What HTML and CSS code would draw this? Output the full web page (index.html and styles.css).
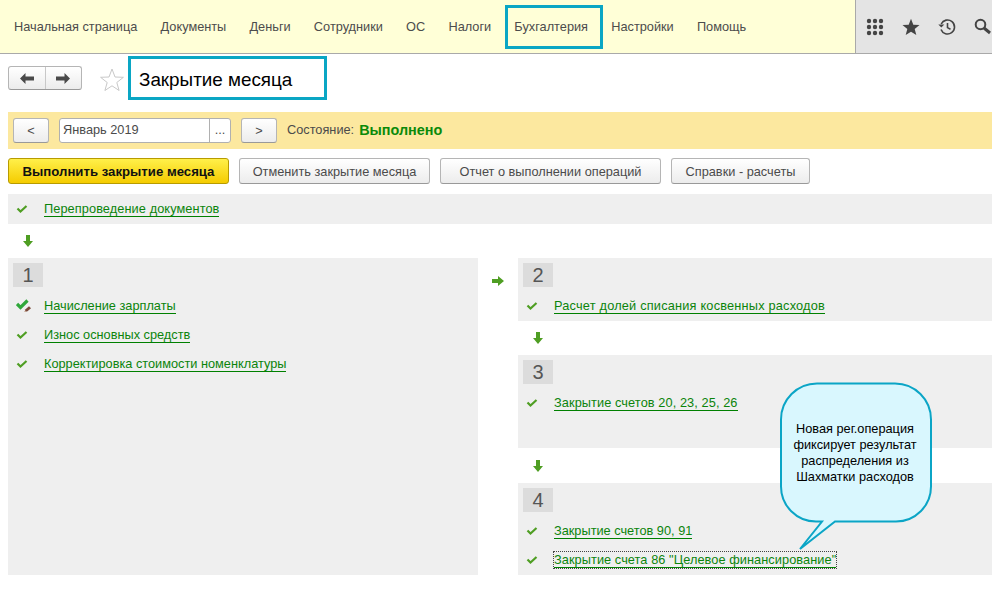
FILE: index.html
```html
<!DOCTYPE html>
<html lang="ru">
<head>
<meta charset="utf-8">
<title>Закрытие месяца</title>
<link rel="stylesheet" href="styles.css">
</head>
<body>
<header class="topbar">
  <nav class="menu">
    <a class="menu-item">Начальная страница</a>
    <a class="menu-item">Документы</a>
    <a class="menu-item">Деньги</a>
    <a class="menu-item">Сотрудники</a>
    <a class="menu-item">ОС</a>
    <a class="menu-item">Налоги</a>
    <a class="menu-item menu-item-marked">Бухгалтерия</a>
    <a class="menu-item">Настройки</a>
    <a class="menu-item">Помощь</a>
  </nav>
  <div class="tools">
    <svg class="tool" width="18" height="18" viewBox="0 0 18 18" fill="#444"><circle cx="3" cy="3" r="2.2"/><circle cx="9" cy="3" r="2.2"/><circle cx="15" cy="3" r="2.2"/><circle cx="3" cy="9" r="2.2"/><circle cx="9" cy="9" r="2.2"/><circle cx="15" cy="9" r="2.2"/><circle cx="3" cy="15" r="2.2"/><circle cx="9" cy="15" r="2.2"/><circle cx="15" cy="15" r="2.2"/></svg>
    <svg class="tool" width="18" height="18" viewBox="0 0 18 18" fill="#444"><path d="M9 .8l2.3 5.9 6.2.3-4.8 4 1.6 6.1L9 13.7l-5.3 3.4 1.6-6.1-4.8-4 6.2-.3z"/></svg>
    <svg class="tool" width="18" height="18" viewBox="0 0 18 18" fill="none" stroke="#444" stroke-width="1.6"><path d="M3.2 6A7 7 0 1 1 3 11.5"/><path d="M9.5 5v4.6l3 1.6"/><path d="M.3 6.6l3 3 3-3z" fill="#444" stroke="none"/></svg>
    <svg class="tool tool-search" width="18" height="18" viewBox="0 0 18 18" fill="none" stroke="#444"><circle cx="6.5" cy="6.5" r="4.8" stroke-width="2"/><path d="M10 10l6 5" stroke-width="3"/></svg>
  </div>
</header>

<section class="titlebar">
  <div class="history">
    <button class="history-btn"><svg width="14" height="11" viewBox="0 0 14 11" fill="#4a4a4a"><path d="M0 5.500L5.500 0v3.500H14v4H5.500V11z"/></svg></button>
    <button class="history-btn"><svg width="14" height="11" viewBox="0 0 14 11" fill="#4a4a4a"><path d="M14 5.500L8.500 0v3.500H0v4h8.500V11z"/></svg></button>
  </div>
  <svg class="fav" width="24" height="23" viewBox="0 0 24 23" fill="#fff" stroke="#c8c8c8"><path d="M12 1l3 8 8.400.3-6.600 5.200 2.300 8-7.100-4.700-7.100 4.700 2.300-8L.6 9.300 9 9z"/></svg>
  <h1 class="title">Закрытие месяца</h1>
</section>

<section class="period">
  <button class="btn btn-small">&lt;</button>
  <div class="date"><span class="date-value">Январь 2019</span><span class="date-pick">...</span></div>
  <button class="btn btn-small">&gt;</button>
  <span class="state-label">Состояние:</span>
  <strong class="state-value">Выполнено</strong>
</section>

<section class="actions">
  <button class="btn btn-primary">Выполнить закрытие месяца</button>
  <button class="btn btn-a">Отменить закрытие месяца</button>
  <button class="btn btn-b">Отчет о выполнении операций</button>
  <button class="btn btn-c">Справки - расчеты</button>
</section>

<section class="panel panel-top">
  <div class="row"><svg class="check" width="12" height="9" viewBox="0 0 12 9"><path d="M1.500 4l3 3 6-5.500" fill="none" stroke="#4f9e23" stroke-width="2.200"/></svg><a class="link link-loose">Перепроведение документов</a></div>
</section>

<div class="arrow-row arrow-row-first">
  <svg width="10" height="12" viewBox="0 0 10 12" fill="#4f9e23"><path d="M3 0h4v6h3l-5 6-5-6h3z"/></svg>
</div>

<main class="flow">
  <section class="panel column-left">
    <div class="num">1</div>
    <div class="row"><svg class="check check-edit" width="16" height="14" viewBox="0 0 16 14"><path d="M1 5l3.500 3.500L11.500 1.500" fill="none" stroke="#2fa83a" stroke-width="3.200"/><path d="M8.500 13l1-2.800 3.500-3 2 2-3.500 3z" fill="#7a4a3a"/><path d="M8.500 13l.6-1.600 1 1z" fill="#e6c8b0"/></svg><a class="link">Начисление зарплаты</a></div>
    <div class="row"><svg class="check" width="12" height="9" viewBox="0 0 12 9"><path d="M1.500 4l3 3 6-5.500" fill="none" stroke="#4f9e23" stroke-width="2.200"/></svg><a class="link">Износ основных средств</a></div>
    <div class="row"><svg class="check" width="12" height="9" viewBox="0 0 12 9"><path d="M1.500 4l3 3 6-5.500" fill="none" stroke="#4f9e23" stroke-width="2.200"/></svg><a class="link">Корректировка стоимости номенклатуры</a></div>
  </section>

  <div class="arrow-side">
    <svg width="12" height="10" viewBox="0 0 12 10" fill="#4f9e23"><path d="M0 3h6V0l6 5-6 5V7H0z"/></svg>
  </div>

  <div class="column-right">
    <section class="panel panel-2">
      <div class="num">2</div>
      <div class="row"><svg class="check" width="12" height="9" viewBox="0 0 12 9"><path d="M1.500 4l3 3 6-5.500" fill="none" stroke="#4f9e23" stroke-width="2.200"/></svg><a class="link link-wide">Расчет долей списания косвенных расходов</a></div>
    </section>
    <div class="arrow-row arrow-row-2">
      <svg width="10" height="12" viewBox="0 0 10 12" fill="#4f9e23"><path d="M3 0h4v6h3l-5 6-5-6h3z"/></svg>
    </div>
    <section class="panel panel-3">
      <div class="num">3</div>
      <div class="row"><svg class="check" width="12" height="9" viewBox="0 0 12 9"><path d="M1.500 4l3 3 6-5.500" fill="none" stroke="#4f9e23" stroke-width="2.200"/></svg><a class="link link-loose">Закрытие счетов 20, 23, 25, 26</a></div>
    </section>
    <div class="arrow-row arrow-row-3">
      <svg width="10" height="12" viewBox="0 0 10 12" fill="#4f9e23"><path d="M3 0h4v6h3l-5 6-5-6h3z"/></svg>
    </div>
    <section class="panel panel-4">
      <div class="num">4</div>
      <div class="row"><svg class="check" width="12" height="9" viewBox="0 0 12 9"><path d="M1.500 4l3 3 6-5.500" fill="none" stroke="#4f9e23" stroke-width="2.200"/></svg><a class="link">Закрытие счетов 90, 91</a></div>
      <div class="row"><svg class="check" width="12" height="9" viewBox="0 0 12 9"><path d="M1.500 4l3 3 6-5.500" fill="none" stroke="#4f9e23" stroke-width="2.200"/></svg><a class="link link-focus">Закрытие счета 86 "Целевое финансирование"</a></div>
    </section>
  </div>
</main>

<aside class="callout">
  <svg class="callout-shape" width="156" height="172" viewBox="0 0 156 172"><path d="M38 1.500h78a36 36 0 0 1 36 36v67a35 35 0 0 1-35 35H56L21 167 43 139.500H37a35 35 0 0 1-35-35v-67a36 36 0 0 1 36-36z" fill="#d9f7fe" stroke="#0ba5c6" stroke-width="2"/></svg>
  <p class="callout-text">Новая рег.операция<br>фиксирует результат<br>распределения из<br>Шахматки расходов</p>
</aside>
</body>
</html>
```

FILE: styles.css
```css
* { box-sizing: border-box; }
html, body { margin: 0; padding: 0; }
body {
  position: relative;
  width: 992px;
  height: 589px;
  overflow: hidden;
  background: #fff;
  font-family: "Liberation Sans", Arial, sans-serif;
  font-size: 12.75px;
  color: #4b4b4b;
}
button { font-family: inherit; font-size: inherit; color: inherit; cursor: pointer; }

.topbar {
  display: flex;
  height: 54px;
  background: #ffffd7;
  border-bottom: 1px solid #a9a9a9;
}
.menu { flex: 1; display: flex; align-items: center; padding: 0 0 0 14px; gap: 23.2px; }
.menu-item { white-space: nowrap; color: #4c4c4c; }
.menu-item-marked {
  margin: 0 -15px 0 -9px;
  padding: 0 12px 0 6px;
  height: 44px;
  line-height: 38px;
  border: 3px solid #0aa6c4;
}
.tools {
  width: 137px;
  display: flex;
  align-items: center;
  gap: 18px;
  padding: 0 0 0 10px;
  background: #e4e4e4;
  border-left: 1px solid #a9a9a9;
  overflow: hidden;
}
.tool { flex: none; }

.titlebar {
  display: flex;
  align-items: center;
  height: 46px;
  padding: 2px 0 0 8px;
}
.history {
  display: flex;
  width: 74px;
  height: 24px;
  border: 1px solid #b5b5b5;
  border-bottom-color: #999;
  border-radius: 3px;
  background: linear-gradient(#fff, #ececec);
}
.history-btn {
  flex: 1;
  display: flex;
  align-items: center;
  justify-content: center;
  padding: 0;
  border: 0;
  background: none;
}
.history-btn + .history-btn { border-left: 1px solid #c8c8c8; }
.fav { margin: 2px 4px 0 18px; flex: none; }
.title {
  width: 199px;
  height: 44px;
  margin: 0;
  padding: 0 0 0 8px;
  line-height: 41px;
  border: 3px solid #0aa6c4;
  font-size: 18.85px;
  font-weight: 400;
  color: #000;
  white-space: nowrap;
}

.period {
  display: flex;
  align-items: center;
  height: 37px;
  margin: 12px 0 0 8px;
  padding: 0 0 0 5px;
  background: #fce89f;
}
.btn {
  height: 26px;
  padding: 0;
  border: 1px solid #b5b5b5;
  border-bottom-color: #999;
  border-radius: 3px;
  background: linear-gradient(#fff, #ececec);
  white-space: nowrap;
}
.btn-small { width: 36px; height: 25px; }
.date {
  display: flex;
  width: 172px;
  height: 25px;
  margin: 0 10px;
  background: #fff;
  border: 1px solid #b0b0b0;
  border-radius: 3px;
  line-height: 22px;
}
.date-value { flex: 1; padding-left: 3px; }
.date-pick { width: 21px; border-left: 1px solid #b0b0b0; text-align: center; }
.state-label { margin: 0 0 2px 10px; }
.state-value { margin: 0 0 2px 5px; font-size: 14.4px; color: #0a8a0a; }

.actions { display: flex; gap: 10px; margin: 9px 0 0 8px; }
.btn-primary {
  width: 221px;
  border-color: #b79b00;
  background: linear-gradient(#fff04a, #f5cc00);
  color: #111;
  font-size: 13.2px;
  font-weight: 700;
}
.btn-a { width: 191px; }
.btn-b { width: 221px; }
.btn-c { width: 139px; }

.panel { background: #efefef; }
.panel-top { height: 30px; margin: 10px 0 0 8px; padding-top: 0; }
.row { display: flex; align-items: center; height: 29px; position: relative; padding-left: 36px; }
.check { position: absolute; left: 8px; top: 50%; transform: translateY(-50%); }
.check-edit { left: 8px; }
.link {
  color: #0b840b;
  border-bottom: 1px solid #008000;
  line-height: 15px;
  white-space: nowrap;
}
.link-loose { letter-spacing: .09px; }
.link-wide { letter-spacing: .2px; }
.link-focus { letter-spacing: .07px; outline: 1px dotted #444; outline-offset: 0; }

.arrow-row { display: flex; align-items: center; }
.arrow-row-first { height: 34px; padding-left: 23px; }
.arrow-row-2 { height: 34px; padding-left: 15px; }
.arrow-row-3 { height: 35px; padding-left: 15px; }

.flow { display: flex; margin-left: 8px; }
.column-left { width: 470px; height: 317px; padding-top: 5px; }
.arrow-side { width: 40px; padding: 16px 0 0 14px; }
.column-right { width: 474px; }
.panel-2 { height: 63px; padding-top: 5px; }
.panel-3 { height: 93px; padding-top: 5px; }
.panel-4 { height: 92px; padding-top: 5px; }
.num {
  width: 30px;
  height: 24px;
  margin: 0 0 4px 5px;
  background: #dcdcdc;
  font-size: 20px;
  line-height: 24px;
  text-align: center;
  color: #555;
}

.callout {
  position: absolute;
  left: 779px;
  top: 382px;
  width: 156px;
  height: 172px;
}
.callout-shape { position: absolute; left: 0; top: 0; }
.callout-text {
  position: relative;
  margin: 0;
  width: 152px;
  padding-top: 39px;
  line-height: 16px;
  text-align: center;
  color: #000;
}
```
